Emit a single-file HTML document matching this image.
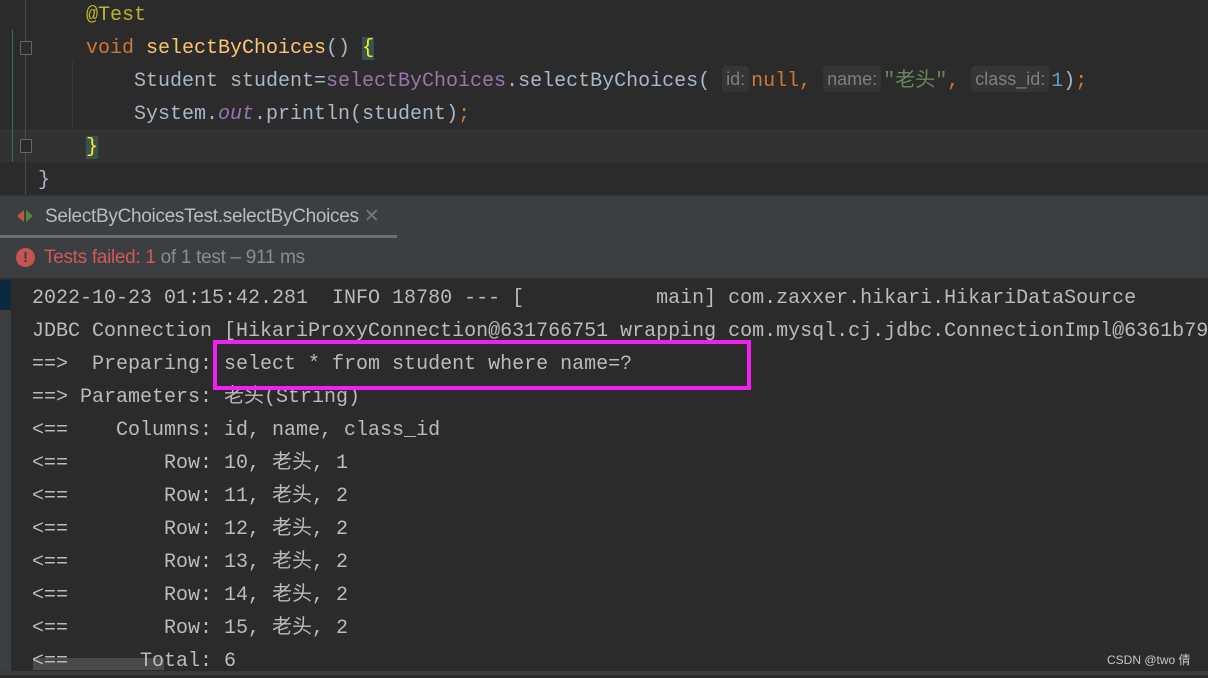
<!DOCTYPE html>
<html><head><meta charset="utf-8"><style>
*{margin:0;padding:0;box-sizing:border-box}
body{width:1208px;height:675px;overflow:hidden;background:#2b2b2b;position:relative;font-family:"Liberation Mono","Noto Sans CJK SC",monospace;font-size:20px;color:#a9b7c6}
.l{position:absolute;white-space:pre;line-height:33px;height:33px}
.ui{font-family:"Liberation Sans","Noto Sans CJK SC",sans-serif}
.hint{display:inline-block;height:26px;line-height:26px;vertical-align:1px;background:#353535;color:#7f7f7f;font-family:"Liberation Sans",sans-serif;font-size:18px;border-radius:4px;padding:0 4px;margin:0 2px 0 0}
.k{color:#cc7832}.f{color:#ffc66d}.p{color:#9876aa}.s{color:#6a8759}.n{color:#6897bb}
.c{color:#bbbbbb}
</style></head><body>
<div style="position:absolute;left:0;top:129px;width:1208px;height:33px;background:#323232"></div>
<div style="position:absolute;left:25px;top:0;width:1px;height:195px;background:#4a4a4a"></div>
<div style="position:absolute;left:12px;top:30px;width:1px;height:132px;background:#3f6b50"></div>
<div style="position:absolute;left:72px;top:62px;width:1px;height:66px;background:#3a3a3a"></div>
<div style="position:absolute;left:20px;top:41px;width:12px;height:14px;border:1px solid #666;border-radius:1px;background:#2b2b2b"></div>
<div style="position:absolute;left:20px;top:139px;width:12px;height:14px;border:1px solid #666;border-radius:1px;background:#2b2b2b"></div>
<div class="l" style="left:86px;top:-1px;color:#bbb529">@Test</div>
<div class="l" style="left:86px;top:32px"><span class="k">void </span><span class="f">selectByChoices</span>() <span style="background:#3b514d;color:#ffef28">{</span></div>
<div class="l" style="left:134px;top:65px">Student student=<span class="p">selectByChoices</span>.selectByChoices( <span class="hint">id:</span><span class="k">null,</span> <span class="hint">name:</span><span class="s">"老头"</span><span class="k">,</span> <span class="hint">class_id:</span><span class="n">1</span>)<span class="k">;</span></div>
<div class="l" style="left:134px;top:98px">System.<span class="p" style="font-style:italic">out</span>.println(student)<span class="k">;</span></div>
<div class="l" style="left:86px;top:131px"><span style="background:#3b514d;color:#ffef28">}</span></div>
<div class="l" style="left:38px;top:164px">}</div>
<div style="position:absolute;left:0;top:195px;width:1208px;height:83px;background:#3c3f41;border-top:1px solid #323232"></div>
<div style="position:absolute;left:0;top:235px;width:397px;height:3px;background:#6d6e70"></div>
<div style="position:absolute;left:17px;top:210px;width:0;height:0;border-top:6px solid transparent;border-bottom:6px solid transparent;border-right:7px solid #c05a3a"></div>
<div style="position:absolute;left:26px;top:210px;width:0;height:0;border-top:6px solid transparent;border-bottom:6px solid transparent;border-left:7px solid #4f8a3a"></div>
<div class="l ui" style="left:45px;top:200px;font-size:19px;color:#bbbbbb;letter-spacing:-0.3px">SelectByChoicesTest.selectByChoices <span style="color:#777">✕</span></div>
<div style="position:absolute;left:16px;top:248px;width:19px;height:19px;border-radius:50%;background:#c75450;color:#3c3f41;font:bold 15px 'Liberation Sans';text-align:center;line-height:19px">!</div>
<div class="l ui" style="left:44px;top:241px;font-size:19px;color:#d0575a;letter-spacing:-0.3px">Tests failed: 1 <span style="color:#8c8c8c">of 1 test – 911 ms</span></div>
<div style="position:absolute;left:0;top:280px;width:11px;height:395px;background:#3c3f41"></div>
<div style="position:absolute;left:0;top:280px;width:11px;height:30px;background:#0d293e"></div>
<div class="c">
<div class="l" style="left:32px;top:282px">2022-10-23 01:15:42.281  INFO 18780 --- [           main] com.zaxxer.hikari.HikariDataSource</div>
<div class="l" style="left:32px;top:315px">JDBC Connection [HikariProxyConnection@631766751 wrapping com.mysql.cj.jdbc.ConnectionImpl@6361b79</div>
<div class="l" style="left:32px;top:348px">==>  Preparing: select * from student where name=?</div>
<div class="l" style="left:32px;top:381px">==> Parameters: 老头(String)</div>
<div class="l" style="left:32px;top:414px">&lt;==    Columns: id, name, class_id</div>
<div class="l" style="left:32px;top:447px">&lt;==        Row: 10, 老头, 1</div>
<div class="l" style="left:32px;top:480px">&lt;==        Row: 11, 老头, 2</div>
<div class="l" style="left:32px;top:513px">&lt;==        Row: 12, 老头, 2</div>
<div class="l" style="left:32px;top:546px">&lt;==        Row: 13, 老头, 2</div>
<div class="l" style="left:32px;top:579px">&lt;==        Row: 14, 老头, 2</div>
<div class="l" style="left:32px;top:612px">&lt;==        Row: 15, 老头, 2</div>
<div style="position:absolute;left:33px;top:658px;width:131px;height:12px;background:#4a4a4a"></div>
<div class="l" style="left:32px;top:645px">&lt;==      Total: 6</div>
</div>
<div style="position:absolute;left:213px;top:340px;width:538px;height:50px;border:4px solid #f020f0"></div>
<div class="ui" style="position:absolute;left:1107px;top:651px;font-size:12px;color:#c8c8c8">CSDN @two 倩</div>
<div style="position:absolute;left:0;top:671px;width:1208px;height:4px;background:#3a3a3a"></div>
</body></html>
